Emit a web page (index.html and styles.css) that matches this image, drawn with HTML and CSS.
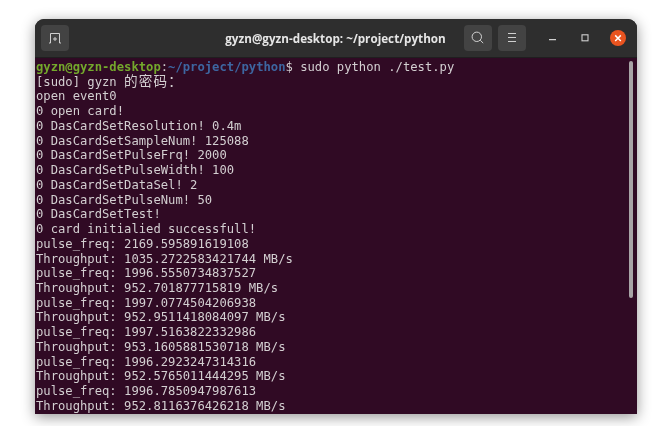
FILE: index.html
```html
<!DOCTYPE html>
<html lang="en">
<head>
<meta charset="utf-8">
<title>Terminal</title>
<link rel="stylesheet" href="styles.css">
</head>
<body>
<div class="window">
  <header class="titlebar">
    <button class="tb-btn new-tab" aria-label="New tab">
      <svg width="14" height="14" viewBox="0 0 14 14" fill="none" stroke="#d0d0d0" stroke-width="1"><path d="M1 12h1.5V2.5h9V12H13"/><path d="M7 6v4M5 8h4"/></svg>
    </button>
    <div class="title">gyzn@gyzn-desktop: ~/project/python</div>
    <div class="tb-right">
      <button class="tb-btn" aria-label="Search">
        <svg width="14" height="14" viewBox="0 0 14 14" fill="none" stroke="#d0d0d0" stroke-width="1"><circle cx="5.8" cy="5.8" r="4.7"/><path d="M9.2 9.2l3 2.9"/></svg>
      </button>
      <button class="tb-btn" aria-label="Menu">
        <svg width="14" height="14" viewBox="0 0 14 14" fill="none" stroke="#d0d0d0" stroke-width="1"><path d="M3 2.5h8M3 6.5h8M3 10.5h8"/></svg>
      </button>
      <div class="win-controls">
        <svg width="14" height="14" viewBox="0 0 14 14" fill="none" stroke="#d0d0d0" stroke-width="1.1"><path d="M3 8.6h7"/></svg>
        <svg width="14" height="14" viewBox="0 0 14 14" fill="none" stroke="#d0d0d0" stroke-width="1.1"><rect x="4" y="3.8" width="6" height="6"/></svg>
        <span class="close"><svg width="16" height="16" viewBox="0 0 16 16" fill="none" stroke="#fff" stroke-width="1.5"><path d="M5.2 5.4l5.6 5.6M10.8 5.4l-5.6 5.6"/></svg></span>
      </div>
    </div>
  </header>
  <div class="term">
    <pre class="output"><span class="green">gyzn@gyzn-desktop</span>:<span class="blue">~/project/python</span>$ sudo python ./test.py
[sudo] gyzn <span class="cjk" lang="zh-CN">的密码：</span>
open event0
0 open card!
0 DasCardSetResolution! 0.4m
0 DasCardSetSampleNum! 125088
0 DasCardSetPulseFrq! 2000
0 DasCardSetPulseWidth! 100
0 DasCardSetDataSel! 2
0 DasCardSetPulseNum! 50
0 DasCardSetTest!
0 card initialied successfull!
pulse_freq: 2169.595891619108
Throughput: 1035.2722583421744 MB/s
pulse_freq: 1996.5550734837527
Throughput: 952.701877715819 MB/s
pulse_freq: 1997.0774504206938
Throughput: 952.9511418084097 MB/s
pulse_freq: 1997.5163822332986
Throughput: 953.1605881530718 MB/s
pulse_freq: 1996.2923247314316
Throughput: 952.5765011444295 MB/s
pulse_freq: 1996.7850947987613
Throughput: 952.8116376426218 MB/s</pre>
    <div class="scrollbar"><div class="thumb"></div></div>
  </div>
</div>
</body>
</html>
```

FILE: styles.css
```css
html, body { margin: 0; padding: 0; }
body { width: 664px; height: 426px; background: #fff; overflow: hidden; }
.window {
  box-sizing: border-box;
  width: 602px;
  height: 395px;
  margin: 19px 0 0 34.5px;
  display: flex;
  flex-direction: column;
  border-radius: 9px 9px 0 0;
  background: #2f2f2f;
  box-shadow: 0 3px 14px rgba(0,0,0,.42);
  overflow: hidden;
  filter: blur(.3px);
}
.titlebar {
  flex: 0 0 39px;
  box-sizing: border-box;
  display: grid;
  grid-template-columns: 1fr auto 1fr;
  align-items: center;
  padding: 0 11px;
  background: #2e2e2e;
  border-bottom: 1px solid #1f1f1f;
}
.tb-btn {
  width: 28px;
  height: 26px;
  padding: 0;
  border: 0;
  border-radius: 4px;
  background: #434343;
  display: flex;
  align-items: center;
  justify-content: center;
}
.new-tab { justify-self: start; margin-left: -4.5px; }
.title {
  font: 700 11.7px "Open Sans", "Noto Sans", sans-serif;
  color: #e6e6e6;
  white-space: nowrap;
}
.tb-right { display: flex; align-items: center; justify-content: flex-end; gap: 6px; }
.win-controls { display: flex; align-items: center; margin-left: 14px; gap: 18px; }
.close {
  width: 16px;
  height: 16px;
  border-radius: 50%;
  background: #e95420;
  display: flex;
  align-items: center;
  justify-content: center;
}
.term {
  flex: 1;
  min-height: 0;
  display: flex;
  background: #300a24;
  overflow: hidden;
}
.output {
  flex: 1;
  margin: 0;
  padding: 2px 0 0 1.5px;
  font: 12.2px/14.74px "DejaVu Sans Mono", "Noto Sans CJK SC", monospace;
  color: #d3cfd1;
  overflow: hidden;
}
.green { color: #74a82c; font-weight: 700; }
.blue { color: #3d66a0; font-weight: 700; }
.cjk {
  font-family: "Noto Sans CJK SC", sans-serif;
  font-size: 13.6px;
  letter-spacing: 1.1px;
  line-height: 0;
}
.scrollbar { flex: 0 0 8px; box-sizing: border-box; padding: 2.7px 3.5px 0 0; }
.thumb { width: 4.5px; height: 237px; background: #a8a4a6; border-radius: 2px; }
```
